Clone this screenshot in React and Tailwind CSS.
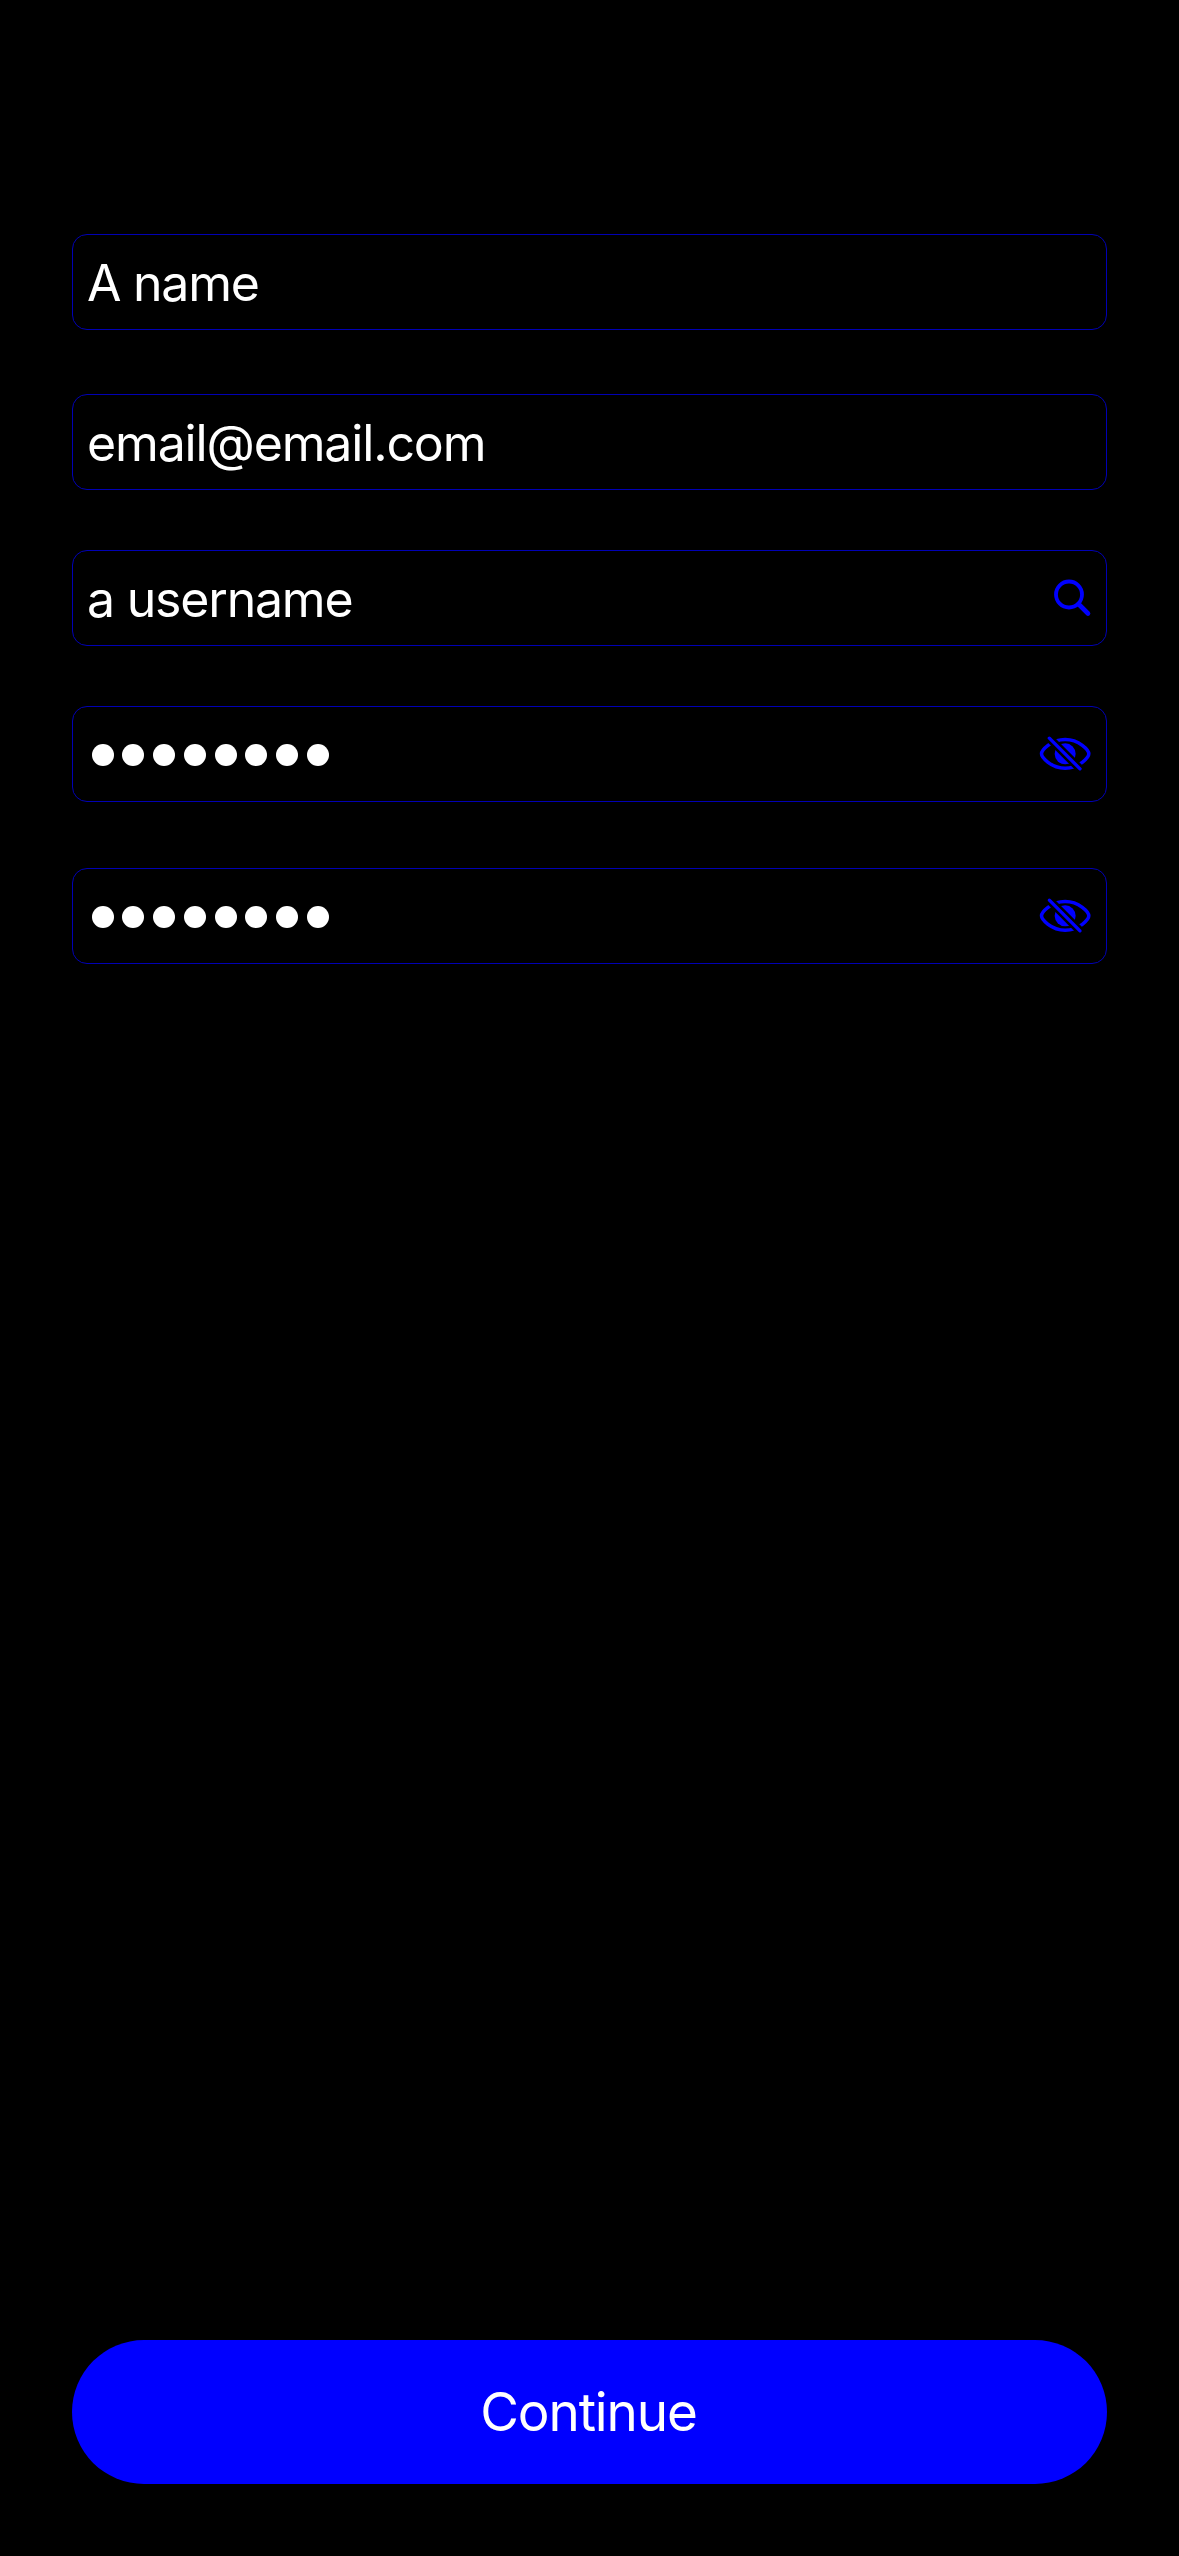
function SearchIcon() {
  return (
    <svg className="h-[40px] w-[40px]" viewBox="0 0 40 40" fill="none" stroke="#0000ff" strokeLinecap="round">
      <circle cx="17" cy="16.5" r="13" strokeWidth="3.8" />
      <path d="M27 26.5 L36 35.5" strokeWidth="4.6" />
    </svg>
  );
}

function EyeSlashIcon() {
  return (
    <svg className="h-[40px] w-[54px]" viewBox="55 102 162 120" fill="none" stroke="#0000ff">
      <path
        d="M65.5 161.5 C65.5 151 94 118.5 136.5 118.5 C179 118.5 207.5 151 207.5 161.5 C207.5 172 179 204.5 136.5 204.5 C94 204.5 65.5 172 65.5 161.5 Z"
        strokeWidth="10.5"
      />
      <circle cx="136.5" cy="161.5" r="31.5" fill="#0000ff" stroke="none" />
      <path d="M76 101.5 L194 219.5" stroke="#000" strokeWidth="25" />
      <path d="M89 114.5 L181 206.5" strokeWidth="10" strokeLinecap="round" />
    </svg>
  );
}

function Field({ children, icon, className }) {
  return (
    <div
      className={`flex h-[96px] w-full items-center justify-between rounded-[15px] border border-[#0000b4] pl-[15px] pr-[14px] text-white ${className}`}
    >
      {children}
      {icon}
    </div>
  );
}

function Dots() {
  return (
    <div className="ml-[3.7px] mt-[2px] flex gap-[8.71px]" aria-label="Password">
      {Array.from({ length: 8 }, (_, i) => (
        <span key={i} className="h-[22px] w-[22px] rounded-full bg-white" />
      ))}
    </div>
  );
}

export default function App() {
  return (
    <div className="flex h-[2556px] w-[1179px] flex-col bg-black px-[72px] pt-[234px] pb-[72px] font-[Inter,sans-serif] text-[50px] leading-[60px]">
      <Field className="">
        <span className="-ml-px pt-[2px] tracking-[-1.25px]">A name</span>
      </Field>
      <Field className="mt-[64px]">
        <span className="-ml-px pt-[2px] tracking-[-1.15px]">email@email.com</span>
      </Field>
      <Field className="mt-[60px]" icon={<SearchIcon />}>
        <span className="-ml-px pt-[2px] tracking-[-1.2px]">a username</span>
      </Field>
      <Field className="mt-[60px]" icon={<EyeSlashIcon />}>
        <Dots />
      </Field>
      <Field className="mt-[66px]" icon={<EyeSlashIcon />}>
        <Dots />
      </Field>
      <button className="mt-auto flex h-[144px] w-full items-center justify-center rounded-full bg-[#0000ff] text-[53px] text-white">
        <span className="pr-[2px] tracking-[-1.1px]">Continue</span>
      </button>
    </div>
  );
}
